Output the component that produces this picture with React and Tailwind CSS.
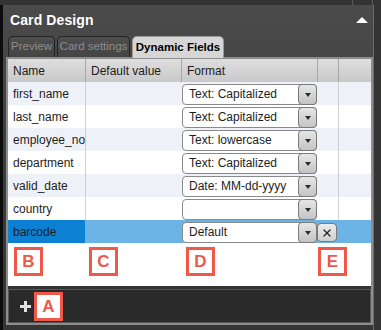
import { X } from 'lucide-react'

const ROWS = [
  { name: 'first_name', format: 'Text: Capitalized' },
  { name: 'last_name', format: 'Text: Capitalized' },
  { name: 'employee_no', format: 'Text: lowercase' },
  { name: 'department', format: 'Text: Capitalized' },
  { name: 'valid_date', format: 'Date: MM-dd-yyyy' },
  { name: 'country', format: '' },
  { name: 'barcode', format: 'Default', selected: true },
]

const COLS = 'grid grid-cols-[77px_96px_136px_21px_33px]'

export default function App() {
  return (
    <div className="w-[381px] h-[330px] bg-[#2e2e2e] font-['Liberation_Sans',Arial,sans-serif] text-[12px] text-[#1e1e1e] overflow-hidden">
      {/* top strip */}
      <div className="h-[5px] flex bg-[#333333]">
        <div className="w-[352px]" />
        <div className="w-px bg-[#5a5a5a]" />
        <div className="w-[19px]" />
        <div className="w-px bg-[#5a5a5a]" />
      </div>

      <div className="flex h-[325px]">
        <div className="w-[3px] bg-[#0c0c0c]" />

        <div className="w-[370px] bg-gradient-to-b from-[#4b4b4b] via-[#3c3c3c] to-[#353535] flex flex-col">
          {/* panel header */}
          <div className="h-[31px] flex items-center justify-between pl-[7px] pr-[5px]">
            <span className="text-white font-bold text-[14px] tracking-[0.1px]">Card Design</span>
            <span className="w-0 h-0 border-x-[6px] border-x-transparent border-b-[6px] border-b-white mb-[1px]" />
          </div>

          {/* tabs */}
          <div className="h-[21px] flex items-end gap-[2px] pl-[5px]">
            <Tab label="Preview" w="w-[47px]" />
            <Tab label="Card settings" w="w-[73px]" />
            <div className="w-[92px] h-[22px] -mb-px rounded-t-[5px] border border-b-0 border-[#9a9a9a] bg-[#d6d6d6] flex items-center justify-center font-bold text-[11.5px] text-black z-10">
              Dynamic Fields
            </div>
          </div>

          {/* frame */}
          <div className="ml-[3px] w-[367px] h-[268px] border-2 border-[#8d8d8d] bg-[#333333] flex flex-col">
            <div className="h-[229px] bg-white flex flex-col">
              {/* header */}
              <div className={`${COLS} h-[23px] bg-gradient-to-b from-[#dedede] to-[#c9c9c9] text-[#202020]`}>
                <div className="pl-[5px] flex items-center">Name</div>
                <div className="pl-[5px] flex items-center border-l border-[#a8a8a8]">Default value</div>
                <div className="pl-[5px] flex items-center border-l border-[#a8a8a8]">Format</div>
                <div className="border-l border-[#a8a8a8]" />
                <div className="border-l border-[#a8a8a8]" />
              </div>

              {ROWS.map((r, i) => (
                <div
                  key={r.name}
                  className={`${COLS} h-[23px] ${r.selected ? 'bg-[#6cb4e6]' : i % 2 === 0 ? 'bg-[#eef2f8]' : 'bg-white'}`}
                >
                  <div className={`pl-[5px] flex items-center ${r.selected ? 'bg-[#0c80d2]' : ''}`}>{r.name}</div>
                  <div className={r.selected ? '' : 'border-l border-[#d0d0d0]'} />
                  <div className="pl-px pt-[2px]">
                    <Select value={r.format} />
                  </div>
                  <div className="pt-[3px]">
                    {r.selected && (
                      <div className="w-[20px] h-[19px] rounded-[4px] border border-[#7a7a7a] bg-gradient-to-b from-[#ececec] to-[#cfcfcf] flex items-center justify-center">
                        <X size={12} strokeWidth={2.5} color="#222" />
                      </div>
                    )}
                  </div>
                  <div className={r.selected ? '' : 'border-l border-[#d0d0d0]'} />
                </div>
              ))}

              {/* annotation labels */}
              <div className={`${COLS} pt-[4px]`}>
                <div className="pl-[6px]"><Badge>B</Badge></div>
                <div className="pl-[4px]"><Badge>C</Badge></div>
                <div className="pl-[5px]"><Badge>D</Badge></div>
                <div className="pl-px"><Badge>E</Badge></div>
              </div>
            </div>

            <div className="h-[3px]" />

            {/* bottom bar */}
            <div className="h-[34px] border border-[#575757] bg-[#2a2a2a] flex items-center pl-[11px] gap-[3px]">
              <span className="relative w-[11px] h-[11px] mt-[1px]">
                <span className="absolute left-0 top-[4px] w-[11px] h-[3px] bg-[#e2e2e2]" />
                <span className="absolute left-[4px] top-0 w-[3px] h-[11px] bg-[#e2e2e2]" />
              </span>
              <Badge>A</Badge>
            </div>
          </div>
        </div>

        <div className="w-[8px] bg-[#343434] border-l border-[#6a6a6a]" />
      </div>
    </div>
  )
}

function Tab({ label, w }) {
  return (
    <div className={`${w} h-[21px] rounded-t-[5px] border border-b-0 border-[#242424] bg-gradient-to-b from-[#4e4e4e] to-[#444444] flex items-center justify-center text-[11.5px] text-[#8d8d8d]`}>
      {label}
    </div>
  )
}

function Select({ value }) {
  return (
    <div className="w-[135px] h-[21px] flex bg-white rounded-[4px] border border-[#8a8a8a]">
      <span className="flex-1 pl-[6px] leading-[19px] whitespace-nowrap overflow-hidden">{value}</span>
      <span className="w-[19px] -my-px -mr-px rounded-[4px] border border-[#7a7a7a] bg-gradient-to-b from-[#e6e6e6] to-[#c4c4c4] flex items-center justify-center">
        <span className="w-0 h-0 border-x-[3.5px] border-x-transparent border-t-[4px] border-t-[#2a2a2a]" />
      </span>
    </div>
  )
}

function Badge({ children }) {
  return (
    <div className="w-[29px] h-[29px] border-[3px] border-[#f0584a] bg-white flex items-center justify-center text-[#f0584a] font-bold text-[17px] leading-none">
      {children}
    </div>
  )
}
